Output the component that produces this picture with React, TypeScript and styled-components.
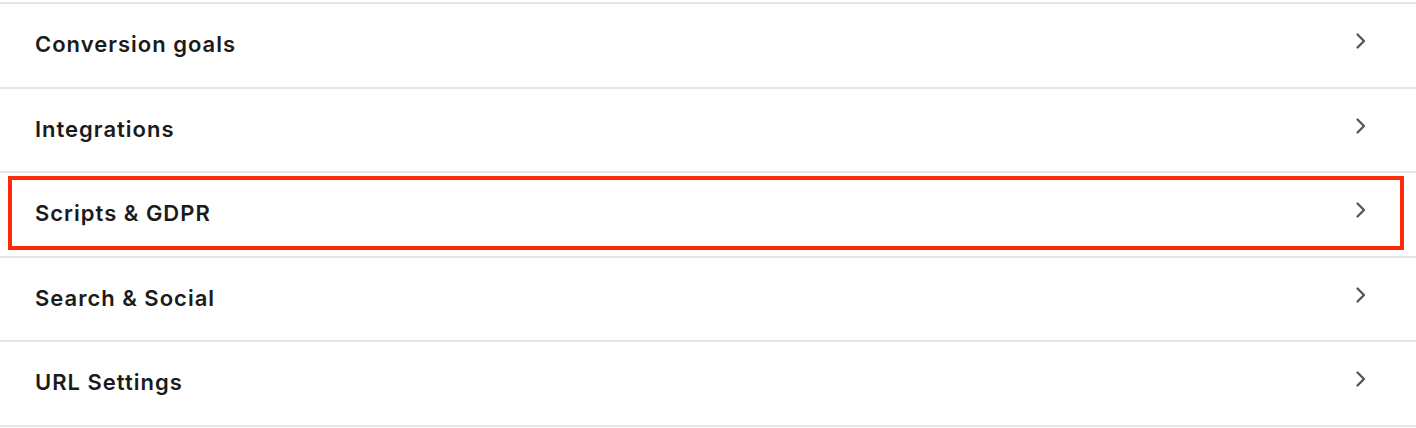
import * as React from 'react';
import styled, { createGlobalStyle } from 'styled-components';

const GlobalStyle = createGlobalStyle`
    * {
        box-sizing: border-box;
    }

    body {
        margin: 0;
        background: #ffffff;
        font-family: Inter, 'Noto Sans', sans-serif;
        color: #1b1b1b;
    }
`;

const Page = styled.div`
    padding-top: 2px;
`;

const List = styled.nav`
    display: flex;
    flex-direction: column;
    border-top: 2px solid #e6e6e6;
`;

const Row = styled.a<{ $highlighted?: boolean }>`
    position: relative;
    display: flex;
    align-items: center;
    justify-content: space-between;
    height: 84.5px;
    padding: 0 48px 0 35px;
    border-bottom: 2px solid #e6e6e6;
    text-decoration: none;
    color: inherit;
    cursor: pointer;

    ${p => p.$highlighted && `
        &:after {
            content: "";
            position: absolute;
            left: 8px;
            right: 12px;
            top: 3px;
            bottom: 6px;
            border: 4px solid #ff2a0a;
            pointer-events: none;
        }
    `}
`;

const Label = styled.span`
    font-size: 22px;
    font-weight: 600;
    letter-spacing: 1px;
    margin-top: -2px;
`;

const Chevron = styled.svg`
    width: 14px;
    height: 18px;
    color: #555555;
    margin-top: -8px;
`;

const ChevronIcon = () => (
    <Chevron viewBox="0 0 14 18" fill="none">
        <path d="M3.5 2.5 L10 9 L3.5 15.5" stroke="currentColor" strokeWidth="2.3" strokeLinecap="round" strokeLinejoin="round" />
    </Chevron>
);

const items = [
    { label: 'Conversion goals' },
    { label: 'Integrations' },
    { label: 'Scripts & GDPR', highlighted: true },
    { label: 'Search & Social' },
    { label: 'URL Settings' },
];

export default function App() {
    return <>
        <GlobalStyle />
        <Page>
            <List>
                {items.map(item =>
                    <Row key={item.label} $highlighted={item.highlighted}>
                        <Label>{item.label}</Label>
                        <ChevronIcon />
                    </Row>
                )}
            </List>
        </Page>
    </>;
}
